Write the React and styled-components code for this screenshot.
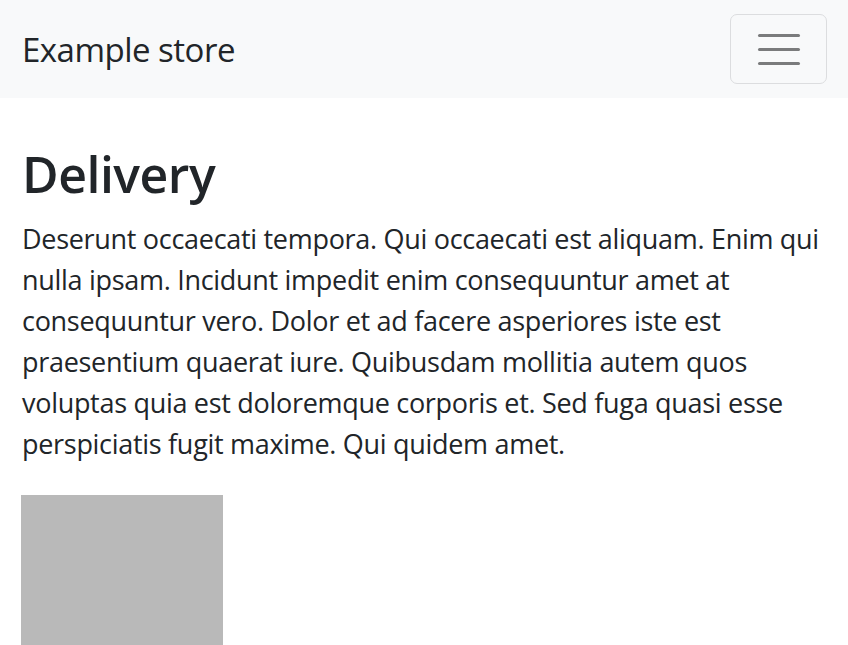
import React from 'react';
import styled, { createGlobalStyle } from 'styled-components';

const Global = createGlobalStyle`
  body {
    margin: 0;
    font-family: 'Open Sans', 'Noto Sans', sans-serif;
    color: #212529;
    background: #fff;
  }
`;

const Navbar = styled.nav`
  display: flex;
  align-items: center;
  justify-content: space-between;
  height: 98px;
  padding: 0 21px 0 22px;
  background: #f8f9fa;
  box-sizing: border-box;
`;

const Brand = styled.a`
  font-size: 33px;
  color: #212529;
  text-decoration: none;
  letter-spacing: -0.5px;
`;

const Toggler = styled.button`
  display: flex;
  flex-direction: column;
  justify-content: center;
  gap: 11px;
  align-items: center;
  width: 97px;
  height: 70px;
  padding: 0;
  background: transparent;
  border: 1px solid #dcdddf;
  border-radius: 7px;
`;

const Bar = styled.span`
  display: block;
  width: 42px;
  height: 3px;
  border-radius: 2px;
  background: #7a7b7c;
`;

const Main = styled.main`
  padding: 46px 21px 0 22px;
`;

const Title = styled.h1`
  margin: 0 0 14px;
  font-size: 50px;
  font-weight: 600;
  line-height: 1.2;
  letter-spacing: -0.5px;
`;

const Text = styled.p`
  margin: 0 0 31px;
  font-size: 27px;
  line-height: 41px;
  letter-spacing: -0.3px;
`;

const Placeholder = styled.div`
  width: 202px;
  height: 150px;
  margin-left: -1px;
  background: #b9b9b9;
`;

export default function App() {
  return (
    <>
      <Global />
      <Navbar>
        <Brand href="#">Example store</Brand>
        <Toggler type="button" aria-label="Toggle navigation">
          <Bar />
          <Bar />
          <Bar />
        </Toggler>
      </Navbar>
      <Main>
        <Title>Delivery</Title>
        <Text>
          Deserunt occaecati tempora. Qui occaecati est aliquam. Enim qui nulla ipsam. Incidunt
          impedit enim consequuntur amet at consequuntur vero. Dolor et ad facere asperiores iste
          est praesentium quaerat iure. Quibusdam mollitia autem quos voluptas quia est doloremque
          corporis et. Sed fuga quasi esse perspiciatis fugit maxime. Qui quidem amet.
        </Text>
        <Placeholder />
      </Main>
    </>
  );
}
